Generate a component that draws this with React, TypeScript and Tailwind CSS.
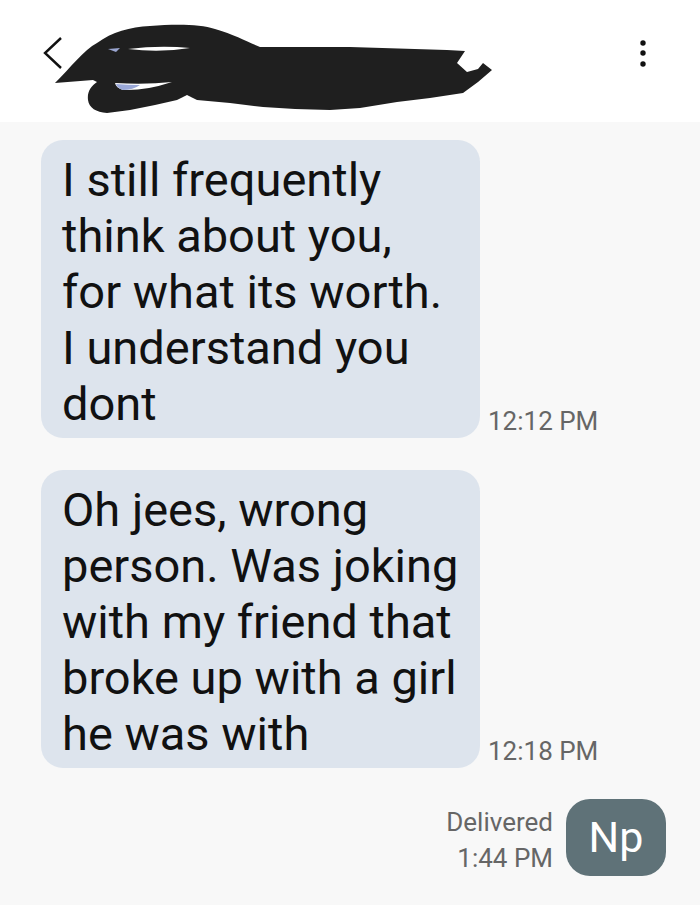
import React from "react";

function Bubble({ lines, time }: { lines: string[]; time: string }) {
  return (
    <div className="flex items-end gap-[8px]">
      <div className="w-[439px] rounded-[22px] bg-[#dde4ed] px-[21px] pt-[12px] pb-[6px] text-[47px] leading-[56px] text-[#111] whitespace-nowrap">
        {lines.map((l, i) => (
          <div key={i}>{l}</div>
        ))}
      </div>
      <div className="mb-[1px] text-[26px] leading-[32px] text-[#666]">{time}</div>
    </div>
  );
}

export default function App() {
  return (
    <div className="w-[700px] h-[905px] bg-[#f8f8f8] font-[Roboto,sans-serif] overflow-hidden">
      <header className="relative h-[122px] bg-white flex items-center justify-between pl-[43px] pr-[52px]">
        <svg width="20" height="34" viewBox="0 0 20 34" className="mb-[14px]">
          <polyline points="18,1 2,16 18,31" fill="none" stroke="#111" strokeWidth="2.4" />
        </svg>
        <svg width="10" height="30" viewBox="0 0 10 30" className="mb-[14px]">
          <circle cx="5" cy="4" r="2.7" fill="#111" />
          <circle cx="5" cy="14" r="2.7" fill="#111" />
          <circle cx="5" cy="25" r="2.7" fill="#111" />
        </svg>
        <svg
          className="absolute left-0 top-0 pointer-events-none"
          width="700"
          height="122"
          viewBox="0 0 700 122"
        >
          <path
            d="M55,83 C70,68 84,50 97,43 C112,32 130,27 150,26 C175,24 200,24 215,29 C235,35 248,42 260,47 L350,47 L447,50 L465,51 L457,63 L467,72 L478,69 L483,63 L492,70 L478,82 L463,93 L430,98 L397,102 L360,108 L330,110 L295,109 L263,107 L230,103 L197,100 L187,95 L177,100 L155,105 L130,110 L107,113 C96,112 89,108 88,100 C87,92 91,86 97,82 L93,80 Z"
            fill="#1f1f1f"
          />
          <path d="M128,49 Q160,45 190,48 Q160,53 128,49 Z" fill="#ffffff" />
          <path d="M108,49 L120,48 L116,52 Z" fill="#9aa5d0" />
          <path d="M115,83 Q145,85 172,82 Q145,91 123,90 Q116,88 115,83 Z" fill="#ffffff" />
          <path d="M116,84 Q128,85 140,85 Q133,90 123,90 Q117,88 116,84 Z" fill="#9aa8d8" />
        </svg>
      </header>
      <div className="flex flex-col pl-[41px] pt-[18px]">
        <Bubble
          lines={[
            "I still frequently",
            "think about you,",
            "for what its worth.",
            "I understand you",
            "dont",
          ]}
          time="12:12 PM"
        />
        <div className="h-[32px]" />
        <Bubble
          lines={[
            "Oh jees, wrong",
            "person. Was joking",
            "with my friend that",
            "broke up with a girl",
            "he was with",
          ]}
          time="12:18 PM"
        />
        <div className="flex justify-end items-end gap-[13px] pr-[34px] mt-[31px]">
          <div className="flex flex-col items-end text-[26px] leading-[36px] text-[#666]">
            <div>Delivered</div>
            <div>1:44 PM</div>
          </div>
          <div className="w-[100px] h-[77px] rounded-[24px] bg-[#5f7278] text-white text-[43px] flex items-center justify-center">
            Np
          </div>
        </div>
      </div>
    </div>
  );
}
